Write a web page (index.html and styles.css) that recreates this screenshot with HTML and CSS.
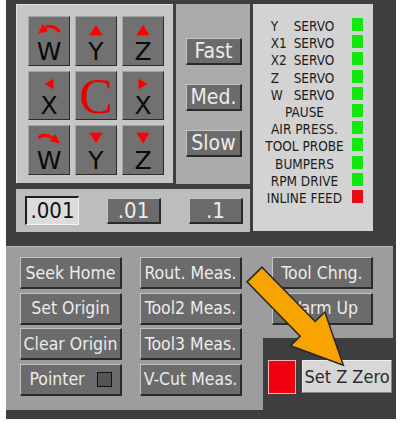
FILE: index.html
```html
<!DOCTYPE html>
<html lang="en">
<head>
  <meta charset="UTF-8">
  <title>CNC Control</title>
  <link rel="stylesheet" href="styles.css">
</head>
<body>

<div class="app">
  <div class="top">
    <div class="left-col">
      <div class="jog-row">
        <div class="jog-panel">
          <div class="jog">
            <svg class="ico" width="32" height="16" viewBox="0 0 32 16"><path d="M29 11 Q22 2 12 5" fill="none" stroke="#f00" stroke-width="4"/><polygon points="3,13 8,1 15,10" fill="#f00"/></svg>
            <span>W</span>
          </div>
          <div class="jog">
            <svg class="ico" width="18" height="16" viewBox="0 0 18 16"><polygon points="9,2 17,15 1,15" fill="#f00"/></svg>
            <span>Y</span>
          </div>
          <div class="jog">
            <svg class="ico" width="18" height="16" viewBox="0 0 18 16"><polygon points="9,2 17,15 1,15" fill="#f00"/></svg>
            <span>Z</span>
          </div>
          <div class="jog">
            <svg class="ico" width="18" height="16" viewBox="0 0 18 16"><polygon points="3,8 15,1 15,15" fill="#f00"/></svg>
            <span>X</span>
          </div>
          <div class="jog center"><span>C</span></div>
          <div class="jog">
            <svg class="ico" width="18" height="16" viewBox="0 0 18 16"><polygon points="15,8 3,1 3,15" fill="#f00"/></svg>
            <span>X</span>
          </div>
          <div class="jog">
            <svg class="ico" width="32" height="16" viewBox="0 0 32 16"><path d="M3 7 Q10 1 20 7" fill="none" stroke="#f00" stroke-width="4"/><polygon points="29,14 24,2 17,11" fill="#f00"/></svg>
            <span>W</span>
          </div>
          <div class="jog">
            <svg class="ico" width="18" height="16" viewBox="0 0 18 16"><polygon points="9,14 17,1 1,1" fill="#f00"/></svg>
            <span>Y</span>
          </div>
          <div class="jog">
            <svg class="ico" width="18" height="16" viewBox="0 0 18 16"><polygon points="9,14 17,1 1,1" fill="#f00"/></svg>
            <span>Z</span>
          </div>
        </div>
        <div class="speed-panel">
          <div class="btn speed">Fast</div>
          <div class="btn speed">Med.</div>
          <div class="btn speed">Slow</div>
        </div>
      </div>
      <div class="inc-panel">
        <div class="inc selected">.001</div>
        <div class="btn inc">.01</div>
        <div class="btn inc">.1</div>
      </div>
    </div>

    <div class="status-panel">
      <div class="row"><div class="label servo"><span class="axis">Y</span>SERVO</div><div class="led"></div></div>
      <div class="row"><div class="label servo"><span class="axis">X1</span>SERVO</div><div class="led"></div></div>
      <div class="row"><div class="label servo"><span class="axis">X2</span>SERVO</div><div class="led"></div></div>
      <div class="row"><div class="label servo"><span class="axis">Z</span>SERVO</div><div class="led"></div></div>
      <div class="row"><div class="label servo"><span class="axis">W</span>SERVO</div><div class="led"></div></div>
      <div class="row"><div class="label">PAUSE</div><div class="led"></div></div>
      <div class="row"><div class="label">AIR PRESS.</div><div class="led"></div></div>
      <div class="row"><div class="label">TOOL PROBE</div><div class="led"></div></div>
      <div class="row"><div class="label">BUMPERS</div><div class="led"></div></div>
      <div class="row"><div class="label">RPM DRIVE</div><div class="led"></div></div>
      <div class="row"><div class="label">INLINE FEED</div><div class="led off"></div></div>
    </div>
  </div>

  <div class="bottom">
    <div class="bottom-left">
      <div class="btn cmd">Seek Home</div>
      <div class="btn cmd">Rout. Meas.</div>
      <div class="btn cmd">Set Origin</div>
      <div class="btn cmd">Tool2 Meas.</div>
      <div class="btn cmd">Clear Origin</div>
      <div class="btn cmd">Tool3 Meas.</div>
      <div class="btn cmd">Pointer <span class="check"></span></div>
      <div class="btn cmd">V-Cut Meas.</div>
    </div>
    <div class="bottom-right">
      <div class="tools">
        <div class="btn cmd">Tool Chng.</div>
        <div class="btn cmd">Warm Up</div>
      </div>
      <div class="zero">
        <div class="red-box"></div>
        <div class="zbtn">Set Z Zero</div>
      </div>
    </div>
  </div>

  <svg class="arrow" width="390" height="419" viewBox="0 0 390 419">
    <polygon transform="translate(248.5 274.5) rotate(45.6)"
      points="0,-10.5 76,-10.5 76,-24 127,0 76,24 76,10.5 0,10.5"
      fill="#f7a400" stroke="#262626" stroke-width="1.5" stroke-linejoin="miter"/>
  </svg>
</div>

</body>
</html>
```

FILE: styles.css
```css
body {
  margin: 0;
  background: #fff;
  font-family: "DejaVu Sans Condensed", "DejaVu Sans", sans-serif;
  font-stretch: condensed;
}
.app {
  position: relative;
  margin-left: 6px;
  width: 390px;
  height: 419px;
  background: #3e3e3e;
  box-sizing: border-box;
}
.top {
  display: flex;
  padding: 4px 0 0 10px;
}
.left-col {
  width: 234px;
}
.jog-row {
  display: flex;
  gap: 3px;
}

/* jog pad */
.jog-panel {
  width: 157px;
  height: 179px;
  box-sizing: border-box;
  padding: 11px 0 0 11px;
  background: #c6c6c6;
  border-top: 1px solid #e2e2e2;
  border-left: 1px solid #e2e2e2;
  display: grid;
  grid-template-columns: repeat(3, 42px);
  grid-template-rows: 50px 49px 50px;
  gap: 5px;
}
.jog {
  background: #717171;
  border: 1px solid;
  border-color: #a4a4a4 #2c2c2c #2c2c2c #a4a4a4;
  box-sizing: border-box;
  display: flex;
  flex-direction: column;
  align-items: center;
  font-family: "DejaVu Sans", sans-serif;
  font-stretch: normal;
  font-size: 25px;
  line-height: 26px;
  color: #0a0a0a;
}
.jog .ico {
  display: block;
  margin-top: 6px;
  margin-bottom: 3px;
}
.jog.center {
  justify-content: center;
  font-family: "Liberation Serif", serif;
  font-size: 50px;
  line-height: 50px;
  color: #e80000;
}

/* speed */
.speed-panel {
  width: 74px;
  height: 180px;
  box-sizing: border-box;
  padding: 34px 0 0 10px;
  background: #ababab;
  display: flex;
  flex-direction: column;
  gap: 19px;
}
.btn {
  background: #6b6b6b;
  color: #ececec;
  border-style: solid;
  border-width: 1px 2px 2px 1px;
  border-color: #c4c4c4 #2a2a2a #2a2a2a #c4c4c4;
  box-sizing: border-box;
  display: flex;
  align-items: center;
  justify-content: center;
  white-space: nowrap;
}
.speed {
  width: 56px;
  height: 27px;
  font-size: 21px;
}

/* increments */
.inc-panel {
  margin-top: 5px;
  height: 43px;
  background: #bdbdbd;
  display: flex;
  align-items: center;
  gap: 28px;
  padding-left: 9px;
}
.inc {
  width: 54px;
  height: 26px;
  font-size: 22px;
}
.inc.selected {
  height: 29px;
  margin-top: -1px;
  box-sizing: border-box;
  display: flex;
  align-items: center;
  justify-content: center;
  background: #dcdcdc;
  color: #111;
  border-style: solid;
  border-width: 2px 1px 1px 2px;
  border-color: #1e1e1e #f4f4f4 #f4f4f4 #1e1e1e;
}

/* status */
.status-panel {
  margin-left: 3px;
  width: 120px;
  height: 227px;
  box-sizing: border-box;
  padding: 14px 10px 0 4px;
  background: #d3d3d3;
  display: grid;
  grid-auto-rows: 17.2px;
}
.row {
  display: flex;
  align-items: flex-start;
}
.label {
  flex: 1;
  text-align: center;
  font-size: 13.5px;
  line-height: 17px;
  color: #1c1c1c;
  white-space: nowrap;
}
.servo {
  display: flex;
  justify-content: center;
  padding-right: 4px;
}
.axis {
  display: inline-block;
  width: 23px;
  text-align: left;
}
.led {
  width: 11px;
  height: 13px;
  background: #11e811;
}
.led.off {
  background: #ee0a14;
}

/* bottom commands */
.bottom {
  display: flex;
  margin-top: 14px;
  height: 164px;
}
.bottom-left {
  width: 257px;
  background: #9d9d9d;
  border-top: 1px solid #b8b8b8;
  box-sizing: border-box;
  padding: 10px 0 0 14px;
  display: grid;
  grid-template-columns: 102px 102px;
  grid-auto-rows: 32px;
  column-gap: 18px;
  row-gap: 3.5px;
}
.cmd {
  font-size: 17.5px;
  height: 32px;
}
.check {
  display: inline-block;
  width: 13px;
  height: 13px;
  margin-left: 12px;
  background: #555;
  border: 1px solid #111;
}
.bottom-right {
  width: 130px;
  display: flex;
  flex-direction: column;
}
.tools {
  height: 92px;
  background: #9d9d9d;
  border-top: 1px solid #b8b8b8;
  box-sizing: border-box;
  padding: 10px 0 0 9px;
  display: flex;
  flex-direction: column;
  gap: 3.5px;
}
.tools .cmd {
  width: 101px;
}
.zero {
  display: flex;
  align-items: flex-start;
  gap: 6px;
  padding: 22px 0 0 5px;
}
.red-box {
  width: 28px;
  height: 34px;
  box-sizing: border-box;
  background: #f0000f;
  border: 1px solid #f2b8b8;
}
.zbtn {
  width: 90px;
  height: 33px;
  box-sizing: border-box;
  background: #d6d6d6;
  color: #2a2a2a;
  border: 1px solid #eeeeee;
  border-right-color: #888;
  border-bottom-color: #888;
  font-size: 18px;
  display: flex;
  align-items: center;
  justify-content: center;
  white-space: nowrap;
}
.arrow {
  position: absolute;
  left: 0;
  top: 0;
  pointer-events: none;
}
```
